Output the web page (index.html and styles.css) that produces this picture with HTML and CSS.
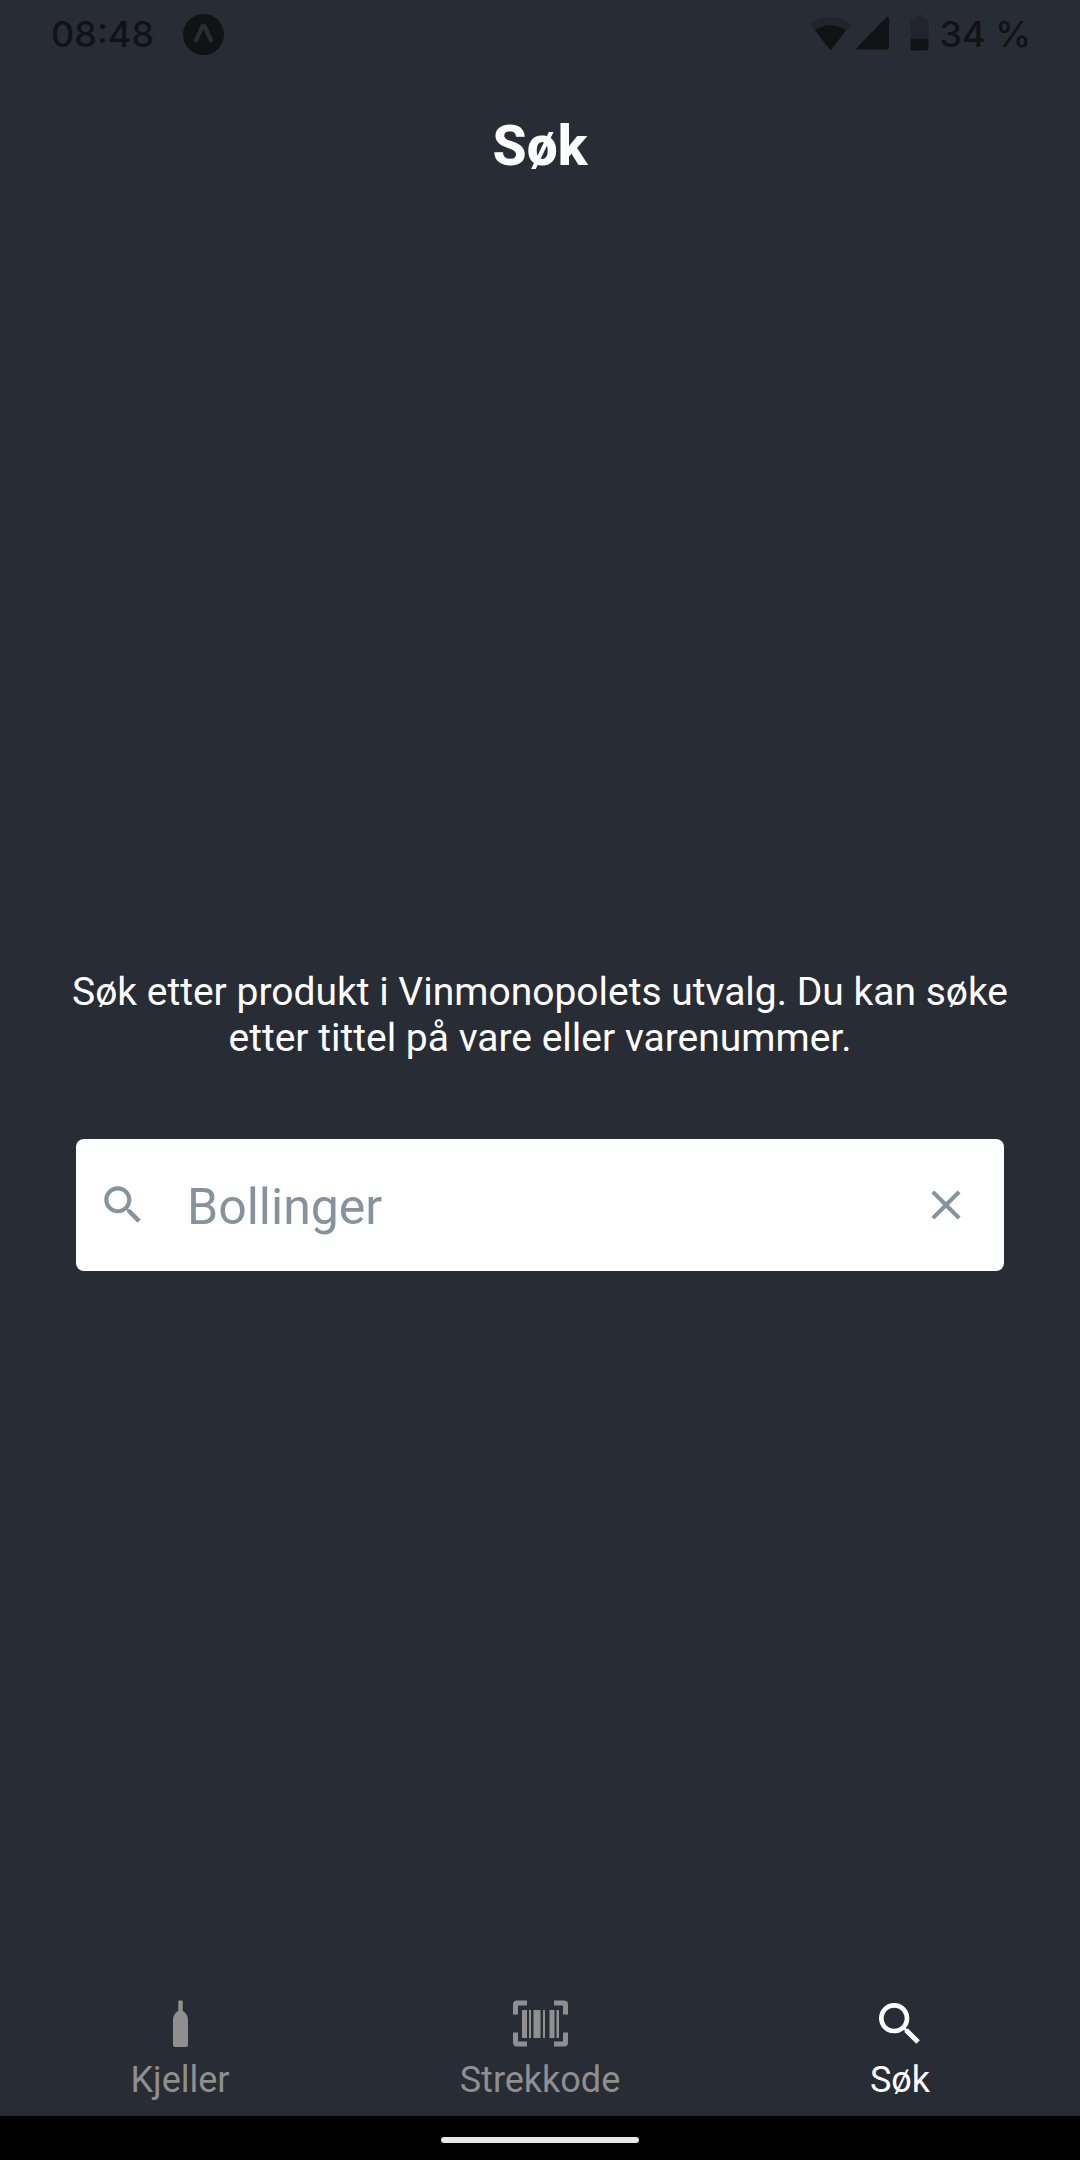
FILE: index.html
```html
<!DOCTYPE html>
<html lang="nb">
<head>
  <meta charset="utf-8">
  <meta name="viewport" content="width=device-width, initial-scale=1">
  <title>Søk</title>
  <link rel="stylesheet" href="styles.css">
</head>
<body>
  <div class="screen">
    <div class="status-bar">
      <div class="status-group status-group-start">
        <span>08:48</span>
        <svg class="status-app" viewBox="0 0 41 41" aria-hidden="true">
          <circle class="status-ink" cx="20.5" cy="20.5" r="20.5"/>
          <path class="status-mark" d="M18 10.3h5l7.6 16.8-3.8 2.2-6.3-14.2-6.3 14.2-3.8-2.2z"/>
        </svg>
      </div>
      <div class="status-group status-group-end">
        <svg class="status-signals" viewBox="0 0 119 36" aria-hidden="true">
          <path class="status-faint" d="M0 8Q20.500-6 41 8L20.500 34z"/>
          <path class="status-ink" d="M5 14.200Q20.500 4.500 36 14.200L22 32.500Q20.500 34.500 19 32.500z"/>
          <path class="status-ink" d="M76.500 1Q79 0 79 2.500V31.500Q79 33.500 77 33.500H48Q45 33.500 47 31.500z"/>
          <path class="status-faint" d="M106-1h7v4h3q2.500 0 2.500 2.500V22H100.500V5.500Q100.500 3 103 3h3z"/>
          <path class="status-ink" d="M100.500 22.500h18V32q0 2.500-2.500 2.500h-13q-2.500 0-2.500-2.500z"/>
        </svg>
        <span>34 %</span>
      </div>
    </div>

    <header class="header">
      <h1 class="title">Søk</h1>
    </header>

    <main class="main">
      <p class="intro">Søk etter produkt i Vinmonopolets utvalg. Du kan søke etter tittel på vare eller varenummer.</p>
      <form class="search" role="search">
        <label class="search-label" for="query">
          <svg class="search-icon" viewBox="0 0 24 24" role="img" aria-label="Søk">
            <path d="M15.500 14h-.79l-.28-.27A6.471 6.471 0 0 0 16 9.500 6.500 6.500 0 1 0 9.500 16c1.610 0 3.090-.59 4.230-1.570l.27.28v.79l5 4.990L20.490 19l-4.990-5zm-6 0C7.010 14 5 11.990 5 9.500S7.010 5 9.500 5 14 7.010 14 9.500 11.990 14 9.500 14z"/>
          </svg>
        </label>
        <input class="search-input" id="query" type="text" placeholder="Bollinger">
        <button class="search-clear" type="reset" aria-label="Tøm">
          <svg class="search-icon" viewBox="0 0 24 24" aria-hidden="true">
            <path d="M19 6.410 17.590 5 12 10.590 6.410 5 5 6.410 10.590 12 5 17.590 6.410 19 12 13.410 17.590 19 19 17.590 13.410 12z"/>
          </svg>
        </button>
      </form>
    </main>

    <nav class="tabs">
      <a class="tab" href="#kjeller">
        <svg class="tab-icon" viewBox="0 0 56 56" aria-hidden="true">
          <path d="M27.300 4.500h2.400q1 0 1 1V15C34.500 17 36 20 36 25v23.500q0 2.500-2.500 2.500h-10q-2.500 0-2.500-2.500V25c0-5 1.500-8 5.300-10V5.500q0-1 1-1z"/>
        </svg>
        <span>Kjeller</span>
      </a>
      <a class="tab" href="#strekkode">
        <svg class="tab-icon" viewBox="0 0 56 56" aria-hidden="true">
          <path d="M1 18.500V8.500Q1 4.500 5 4.500h10V9.500H6v9zM42 4.500h10q4 0 4 4v10h-5v-9h-9zM1 36.500h5v9h9v5H5q-4 0-4-4zM51 36.500h5v10q0 4-4 4H42v-5h9z"/>
          <path d="M10 14h5v28h-5zM17 14h2v28h-2zM21.500 14h7v28h-7zM31 14h2v28h-2zM37.500 14h5v28h-5zM44.500 14h2.500v28h-2.500z"/>
        </svg>
        <span>Strekkode</span>
      </a>
      <a class="tab tab-active" href="#sok" aria-current="page">
        <svg class="tab-icon" viewBox="0 0 24 24" aria-hidden="true">
          <path d="M15.500 14h-.79l-.28-.27A6.471 6.471 0 0 0 16 9.500 6.500 6.500 0 1 0 9.500 16c1.610 0 3.090-.59 4.230-1.570l.27.28v.79l5 4.990L20.490 19l-4.990-5zm-6 0C7.010 14 5 11.990 5 9.500S7.010 5 9.500 5 14 7.010 14 9.500 11.990 14 9.500 14z"/>
        </svg>
        <span>Søk</span>
      </a>
    </nav>

    <div class="system-nav">
      <div class="home-pill"></div>
    </div>
  </div>
</body>
</html>
```

FILE: styles.css
```css
* {
  box-sizing: border-box;
}

body {
  margin: 0;
  background: #282c34;
  color: #fff;
  font-family: Roboto, "Liberation Sans", sans-serif;
}

.screen {
  display: flex;
  flex-direction: column;
  min-height: 100vh;
}

/* System status bar */
.status-bar {
  display: flex;
  justify-content: space-between;
  align-items: center;
  height: 66px;
  padding: 2px 49px 0 51px;
  color: #111214;
  font: 500 36px/44px Inter, "Liberation Sans", sans-serif;
}

.status-group {
  display: flex;
  align-items: center;
}

.status-group-start {
  gap: 29px;
}

.status-group-end {
  gap: 10px;
}

.status-app {
  width: 41px;
  height: 41px;
}

.status-signals {
  width: 119px;
  height: 36px;
  overflow: visible;
}

.status-ink {
  fill: #111214;
}

.status-faint {
  fill: #21242b;
}

.status-mark {
  fill: #282c34;
}

/* Screen title */
.header {
  padding: 48px 24px 42px;
  text-align: center;
}

.title {
  margin: 0;
  font-size: 55px;
  font-weight: 800;
  line-height: 64px;
}

/* Search */
.main {
  display: flex;
  flex: 1;
  flex-direction: column;
  justify-content: center;
  gap: 78px;
  padding: 40px 60px 0;
}

.intro {
  margin: 0;
  font-size: 39px;
  line-height: 46px;
  text-align: center;
}

.search {
  display: flex;
  align-items: center;
  height: 132px;
  margin: 0 16px;
  padding: 0 33px 0 22px;
  border-radius: 8px;
  background: #fff;
}

.search-label {
  display: flex;
}

.search-icon {
  display: block;
  width: 50px;
  height: 50px;
  fill: #86939e;
}

.search-input {
  flex: 1;
  min-width: 0;
  height: 100%;
  padding: 4px 39px 0;
  border: 0;
  outline: 0;
  background: transparent;
  color: #86939e;
  font: 50px Roboto, "Liberation Sans", sans-serif;
}

.search-input::placeholder {
  color: #86939e;
  opacity: 1;
}

.search-clear {
  padding: 0;
  border: 0;
  background: transparent;
}

/* Bottom tabs */
.tabs {
  display: grid;
  grid-template-columns: repeat(3, 1fr);
  border-top: 1px solid #272a32;
}

.tab {
  display: flex;
  flex-direction: column;
  align-items: center;
  gap: 7px;
  padding: 16px 0 15px;
  color: #8f8f8f;
  font-size: 36px;
  line-height: 42px;
  text-decoration: none;
}

.tab-active {
  color: #fff;
}

.tab-icon {
  width: 56px;
  height: 56px;
  fill: currentColor;
}

/* System gesture area */
.system-nav {
  display: flex;
  justify-content: center;
  align-items: center;
  height: 44px;
  padding-top: 4px;
  background: #000;
}

.home-pill {
  width: 198px;
  height: 6px;
  border-radius: 3px;
  background: #e9e9e9;
}
```
